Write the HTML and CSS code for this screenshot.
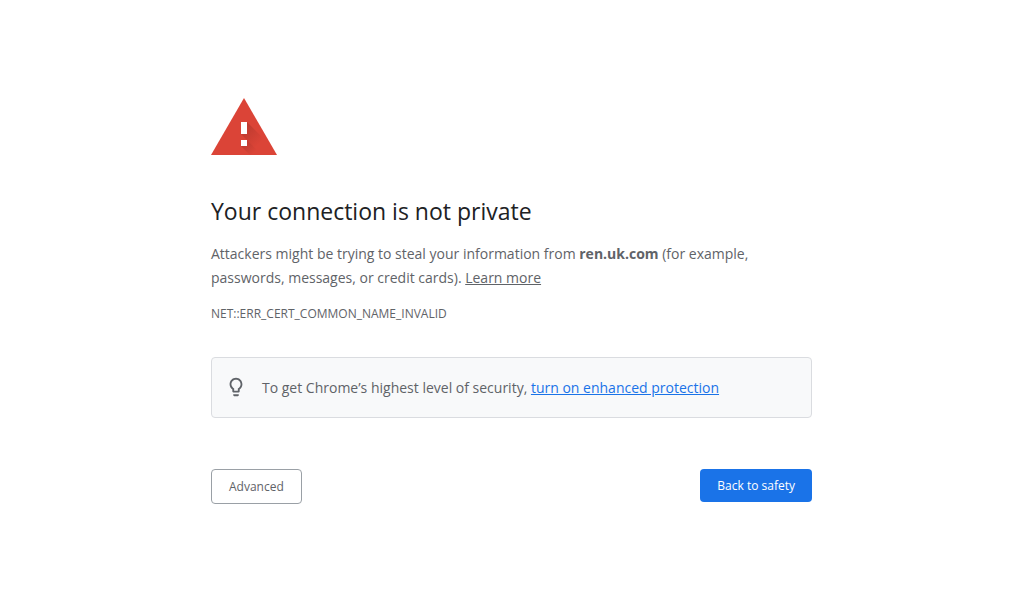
FILE: index.html
```html
<!DOCTYPE html>
<html lang="en">
<head>
  <meta charset="UTF-8" />
  <meta name="viewport" content="width=device-width, initial-scale=1.0"/>
  <title>Privacy error</title>
  <link rel="stylesheet" href="styles.css">
</head>
<body>

  <main class="interstitial">
    <svg class="warning-icon" viewBox="0 0 66 57" aria-hidden="true">
      <defs>
        <linearGradient id="shade" x1="30" y1="24" x2="50" y2="44" gradientUnits="userSpaceOnUse">
          <stop offset="0" stop-color="#7d261e" stop-opacity=".4"/>
          <stop offset="1" stop-color="#7d261e" stop-opacity="0"/>
        </linearGradient>
        <linearGradient id="shade-dot" x1="30" y1="42" x2="43" y2="55" gradientUnits="userSpaceOnUse">
          <stop offset="0" stop-color="#7d261e" stop-opacity=".4"/>
          <stop offset="1" stop-color="#7d261e" stop-opacity="0"/>
        </linearGradient>
      </defs>
      <path fill="#db4437" d="M33 0L66 57H0z"/>
      <path fill="url(#shade)" d="M36 24l17.500 17.500L59 45l3 5-8 1H45L30 36h6z"/>
      <path fill="url(#shade-dot)" d="M36 42l15 15H39l-9-9h6z"/>
      <path fill="#fff" d="M30 24h6v12h-6zM30 42h6v6h-6z"/>
    </svg>

    <h1>Your connection is not private</h1>
    <p class="message">Attackers might be trying to steal your information from <strong>ren.uk.com</strong> (for example, passwords, messages, or credit cards). <a href="#">Learn more</a></p>
    <p class="error-code">NET::ERR_CERT_COMMON_NAME_INVALID</p>

    <div class="promo">
      <svg class="bulb-icon" viewBox="0 0 24 24" aria-hidden="true">
        <path fill="#5f6368" d="M9 21c0 .55.45 1 1 1h4c.55 0 1-.45 1-1v-1H9v1zm3-19C8.140 2 5 5.140 5 9c0 2.380 1.190 4.470 3 5.740V17c0 .55.45 1 1 1h6c.55 0 1-.45 1-1v-2.260c1.810-1.270 3-3.360 3-5.740 0-3.860-3.140-7-7-7zm2.850 11.100l-.85.6V16h-4v-2.300l-.85-.6A4.997 4.997 0 0 1 7 9c0-2.760 2.240-5 5-5s5 2.240 5 5c0 1.630-.8 3.160-2.150 4.100z"/>
      </svg>
      <p>To get Chrome’s highest level of security, <a href="#">turn on enhanced protection</a></p>
    </div>

    <div class="buttons">
      <button type="button" class="details-btn">Advanced</button>
      <button type="button" class="primary-btn">Back to safety</button>
    </div>
  </main>

</body>
</html>
```
FILE: styles.css
```css
* {
  margin: 0;
  padding: 0;
  box-sizing: border-box;
}
body {
  background-color: #fff;
  color: #5f6368;
  font-family: 'Segoe UI', 'Open Sans', 'Noto Sans', sans-serif;
  font-size: 14px;
  line-height: 24px;
}
.interstitial {
  max-width: 601px;
  margin: 98px auto 0;
}
.warning-icon {
  display: block;
  width: 66px;
  height: 57px;
  margin-bottom: 40px;
}
h1 {
  color: #202124;
  font-size: 23px;
  font-weight: 400;
  line-height: 32px;
  margin-bottom: 15px;
}
a {
  color: inherit;
}
.error-code {
  font-size: 12px;
  margin-top: 12px;
}
.promo {
  display: flex;
  align-items: flex-start;
  gap: 15px;
  margin-top: 31px;
  padding: 18px 13px 17px;
  background-color: #f8f9fa;
  border: 1px solid #dadce0;
  border-radius: 4px;
}
.bulb-icon {
  flex: none;
  width: 22px;
  height: 22px;
}
.promo a {
  color: #1a73e8;
}
.buttons {
  display: flex;
  justify-content: space-between;
  align-items: flex-start;
  margin-top: 51px;
}
button {
  padding: 8px 17px;
  border: 0;
  border-radius: 4px;
  font-family: inherit;
  font-size: 12px;
  line-height: 17px;
  cursor: pointer;
}
.details-btn {
  background-color: #fff;
  border: 1px solid #9aa0a6;
  color: #5f6368;
}
.primary-btn {
  background-color: #1a73e8;
  color: #fff;
}
```
